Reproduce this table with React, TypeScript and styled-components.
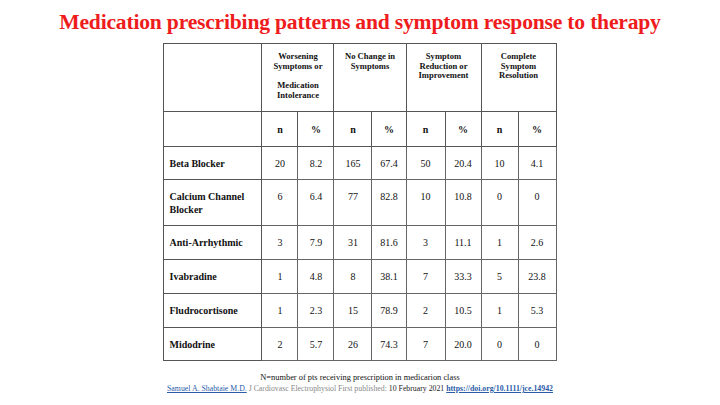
import React from 'react'
import styled, { createGlobalStyle } from 'styled-components'

const GlobalStyle = createGlobalStyle`
  html, body {
    margin: 0;
    padding: 0;
    background: #fff;
  }
  body {
    font-family: 'Liberation Serif', 'Times New Roman', serif;
  }
`

const Slide = styled.div`
  width: 720px;
  height: 405px;
  display: flex;
  flex-direction: column;
  align-items: center;
  overflow: hidden;
`

const Title = styled.h1`
  margin: 10px 0 0;
  font-size: 21.6px;
  line-height: 24px;
  font-weight: 700;
  color: #ee1c1c;
  letter-spacing: -0.2px;
`

const Table = styled.table`
  margin-top: 9px;
  border-collapse: collapse;
  table-layout: fixed;
  width: 392px;
  border: 1.5px solid #555;
  color: #111;
`

const Col = styled.col<{ $w: number }>`
  width: ${p => p.$w}px;
`

const Row = styled.tr<{ $h: number }>`
  height: ${p => p.$h}px;
`

const HeadCell = styled.th`
  border: 1px solid #555;
  font-size: 8.6px;
  line-height: 9.6px;
  font-weight: 700;
  vertical-align: top;
  padding: 8px 1px 0;
  text-align: center;
`

const Gap = styled.span`
  display: block;
  height: 10px;
`

const SubHead = styled.th`
  border: 1px solid #555;
  font-size: 10px;
  font-weight: 700;
  text-align: center;
  vertical-align: middle;
`

const Label = styled.td`
  border: 1px solid #555;
  font-size: 10px;
  line-height: 13px;
  font-weight: 700;
  vertical-align: top;
  padding: 10px 4px 0 5px;
  text-align: left;
`

const Value = styled.td`
  border: 1px solid #666;
  font-size: 10px;
  line-height: 13px;
  vertical-align: top;
  padding: 10px 1px 0;
  text-align: center;
`

const Note = styled.div`
  margin-top: 12px;
  font-size: 8.4px;
  color: #111;
`

const Cite = styled.div`
  margin-top: 2px;
  font-size: 7.8px;
  color: #888;
`

const Author = styled.span`
  color: #2a5ca8;
  text-decoration: underline;
`

const Dark = styled.span`
  color: #222;
`

const Doi = styled.span`
  color: #2a5ca8;
  font-weight: 700;
  text-decoration: underline;
`

const widths = [98, 36, 36, 38, 34, 39, 36, 37, 38]

const rows: { name: string[]; h: number; vals: string[] }[] = [
  { name: ['Beta Blocker'], h: 33, vals: ['20', '8.2', '165', '67.4', '50', '20.4', '10', '4.1'] },
  { name: ['Calcium Channel', 'Blocker'], h: 46, vals: ['6', '6.4', '77', '82.8', '10', '10.8', '0', '0'] },
  { name: ['Anti-Arrhythmic'], h: 34, vals: ['3', '7.9', '31', '81.6', '3', '11.1', '1', '2.6'] },
  { name: ['Ivabradine'], h: 34, vals: ['1', '4.8', '8', '38.1', '7', '33.3', '5', '23.8'] },
  { name: ['Fludrocortisone'], h: 34, vals: ['1', '2.3', '15', '78.9', '2', '10.5', '1', '5.3'] },
  { name: ['Midodrine'], h: 33, vals: ['2', '5.7', '26', '74.3', '7', '20.0', '0', '0'] },
]

export default function App() {
  return (
    <>
      <GlobalStyle />
      <Slide>
        <Title>Medication prescribing patterns and symptom response to therapy</Title>
        <Table>
          <colgroup>
            {widths.map((w, i) => <Col key={i} $w={w} />)}
          </colgroup>
          <thead>
            <Row $h={68}>
              <HeadCell />
              <HeadCell colSpan={2}>
                Worsening<br />Symptoms or<Gap />Medication<br />Intolerance
              </HeadCell>
              <HeadCell colSpan={2}>No Change in<br />Symptoms</HeadCell>
              <HeadCell colSpan={2}>Symptom<br />Reduction or<br />Improvement</HeadCell>
              <HeadCell colSpan={2}>Complete<br />Symptom<br />Resolution</HeadCell>
            </Row>
            <Row $h={35}>
              <SubHead />
              {[0, 1, 2, 3].map(i => (
                <React.Fragment key={i}>
                  <SubHead>n</SubHead>
                  <SubHead>%</SubHead>
                </React.Fragment>
              ))}
            </Row>
          </thead>
          <tbody>
            {rows.map(r => (
              <Row key={r.name.join()} $h={r.h}>
                <Label>
                  {r.name.map((n, i) => (
                    <React.Fragment key={i}>{i > 0 && <br />}{n}</React.Fragment>
                  ))}
                </Label>
                {r.vals.map((v, i) => <Value key={i}>{v}</Value>)}
              </Row>
            ))}
          </tbody>
        </Table>
        <Note>N=number of pts receiving prescription in medicarion class</Note>
        <Cite>
          <Author>Samuel A. Shabtaie M.D.</Author> J Cardiovasc Electrophysiol First published:{' '}
          <Dark>10 February 2021</Dark> <Doi>https://doi.org/10.1111/jce.14942</Doi>
        </Cite>
      </Slide>
    </>
  )
}
